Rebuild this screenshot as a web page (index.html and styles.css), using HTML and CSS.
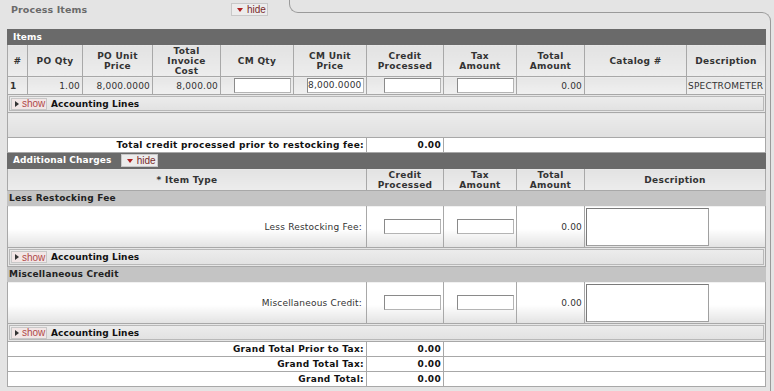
FILE: index.html
```html
<!DOCTYPE html>
<html>
<head>
<meta charset="utf-8">
<link rel="stylesheet" href="styles.css">
</head>
<body>
<div class="page">
  <div class="tabrow">
    <div class="tab">
      <span class="tab-title">Process Items</span>
      <span class="btn hide-btn"><span class="tri-down"></span>hide</span>
    </div>
    <div class="tab-curve"></div>
    <div class="tab-line"></div>
  </div>
  <div class="panel">
    <table class="grid">
      <colgroup>
        <col class="c1"><col class="c2"><col class="c3"><col class="c4"><col class="c5"><col class="c6">
        <col class="c7"><col class="c8"><col class="c9"><col class="c10"><col class="c11">
      </colgroup>
      <tr class="bar"><td colspan="11">Items</td></tr>
      <tr class="head">
        <th class="hl">#</th>
        <th>PO Qty</th>
        <th>PO Unit<br>Price</th>
        <th>Total<br>Invoice<br>Cost</th>
        <th>CM Qty</th>
        <th>CM Unit<br>Price</th>
        <th>Credit<br>Processed</th>
        <th>Tax<br>Amount</th>
        <th>Total<br>Amount</th>
        <th>Catalog #</th>
        <th class="hr">Description</th>
      </tr>
      <tr class="item">
        <td class="b">1</td>
        <td class="num">1.00</td>
        <td class="num">8,000.0000</td>
        <td class="num">8,000.00</td>
        <td class="inp"><span class="field"></span></td>
        <td class="inp"><span class="field">8,000.0000</span></td>
        <td class="inp"><span class="field"></span></td>
        <td class="inp"><span class="field"></span></td>
        <td class="num">0.00</td>
        <td></td>
        <td class="desc">SPECTROMETER</td>
      </tr>
      <tr class="acct acct-first"><td colspan="11"><div class="acct-box"><span class="btn show-btn"><span class="tri-right"></span>show</span><span class="acct-label">Accounting Lines</span></div></td></tr>
      <tr class="blank"><td colspan="11"></td></tr>
      <tr class="total"><td colspan="6" class="lbl">Total credit processed prior to restocking fee:</td><td class="val">0.00</td><td colspan="4"></td></tr>
      <tr class="bar bar2"><td colspan="11">Additional Charges <span class="btn hide-btn bar-btn"><span class="tri-down"></span>hide</span></td></tr>
      <tr class="head head2">
        <th colspan="6">* Item Type</th>
        <th>Credit<br>Processed</th>
        <th>Tax<br>Amount</th>
        <th>Total<br>Amount</th>
        <th colspan="2">Description</th>
      </tr>
      <tr class="sub"><td colspan="11">Less Restocking Fee</td></tr>
      <tr class="charge">
        <td colspan="6" class="clabel">Less Restocking Fee:</td>
        <td class="inp"><span class="field"></span></td>
        <td class="inp"><span class="field"></span></td>
        <td class="num">0.00</td>
        <td colspan="2" class="ta-cell"><span class="ta"></span></td>
      </tr>
      <tr class="acct acct-mid"><td colspan="11"><div class="acct-box"><span class="btn show-btn"><span class="tri-right"></span>show</span><span class="acct-label">Accounting Lines</span></div></td></tr>
      <tr class="sub"><td colspan="11">Miscellaneous Credit</td></tr>
      <tr class="charge">
        <td colspan="6" class="clabel">Miscellaneous Credit:</td>
        <td class="inp"><span class="field"></span></td>
        <td class="inp"><span class="field"></span></td>
        <td class="num">0.00</td>
        <td colspan="2" class="ta-cell"><span class="ta"></span></td>
      </tr>
      <tr class="acct acct-last"><td colspan="11"><div class="acct-box"><span class="btn show-btn"><span class="tri-right"></span>show</span><span class="acct-label">Accounting Lines</span></div></td></tr>
      <tr class="total"><td colspan="6" class="lbl">Grand Total Prior to Tax:</td><td class="val">0.00</td><td colspan="4"></td></tr>
      <tr class="total"><td colspan="6" class="lbl">Grand Total Tax:</td><td class="val">0.00</td><td colspan="4"></td></tr>
      <tr class="total"><td colspan="6" class="lbl">Grand Total:</td><td class="val">0.00</td><td colspan="4"></td></tr>
    </table>
  </div>
</div>
</body>
</html>
```
FILE: styles.css
```css
html, body {
  margin: 0;
  padding: 0;
  background: #e4e4e4;
}
.page {
  width: 774px;
  height: 391px;
  background: #e4e4e4;
  font-family: "DejaVu Sans", Verdana, sans-serif;
  font-size: 9px;
  color: #333;
  overflow: hidden;
}
.tabrow {
  display: flex;
  height: 29px;
  margin-right: 3px;
}
.tab {
  width: 289px;
  display: flex;
  align-items: flex-start;
}
.tab-title {
  margin: 4px 0 0 11px;
  font-weight: bold;
  font-size: 9.5px;
  color: #6a6a6a;
  letter-spacing: 0.1px;
  width: 220px;
}
.tab-curve {
  width: 8px;
  height: 12px;
  border-left: 1px solid #9a9a9a;
  border-bottom: 1px solid #9a9a9a;
  border-bottom-left-radius: 9px;
}
.tab-line {
  flex: 1;
  margin-top: 12px;
  border-top: 1px solid #9a9a9a;
  border-right: 1px solid #9a9a9a;
  border-top-right-radius: 9px;
}
.btn {
  display: inline-flex;
  align-items: center;
  font-family: "Liberation Sans", Arial, sans-serif;
  font-size: 10px;
  box-sizing: border-box;
}
.hide-btn {
  margin-top: 3px;
  height: 13px;
  width: 37px;
  padding-left: 5px;
  background: #ececec;
  border: 1px solid #c8c8c8;
  color: #7a2a2a;
}
.tri-down {
  width: 0;
  height: 0;
  border-left: 3px solid transparent;
  border-right: 3px solid transparent;
  border-top: 4px solid #b02020;
  margin-right: 4px;
}
.tri-right {
  width: 0;
  height: 0;
  border-top: 3px solid transparent;
  border-bottom: 3px solid transparent;
  border-left: 4px solid #333;
  margin-right: 3px;
}
.panel {
  margin-right: 3px;
  padding: 0 5px 4px 7px;
  border-right: 1px solid #9a9a9a;
  height: 362px;
}
.grid {
  width: 758px;
  border-collapse: collapse;
  table-layout: fixed;
}
.c1 { width: 20px; }
.c2 { width: 55px; }
.c3 { width: 70px; }
.c4 { width: 68px; }
.c5 { width: 73px; }
.c6 { width: 73px; }
.c7 { width: 77px; }
.c8 { width: 73px; }
.c9 { width: 68px; }
.c10 { width: 102px; }
.c11 { width: 79px; }
.grid td, .grid th {
  border: 1px solid #a8a8a8;
  padding: 0 2px;
  overflow: hidden;
  white-space: nowrap;
}
.bar td {
  background: #6a6a6a;
  border-color: #6a6a6a;
  color: #fff;
  font-weight: bold;
  font-size: 9px;
  height: 14px;
  padding: 0 0 0 5px;
  letter-spacing: 0.1px;
}
.bar2 td {
  height: 15px;
}
.bar-btn {
  margin: 0 0 0 6px;
  vertical-align: middle;
  letter-spacing: 0;
  font-weight: normal;
}
.head th {
  background: linear-gradient(#e2e2e2, #ededed);
  font-weight: bold;
  color: #333;
  height: 31px;
  line-height: 10px;
  text-align: center;
  letter-spacing: 0.3px;
}
.head2 th {
  height: 21px;
}
.item td {
  background: linear-gradient(#e6e6e6, #f0f0f0);
  height: 17px;
  letter-spacing: 0.2px;
}
.b { font-weight: bold; }
.num { text-align: right; }
.desc { padding-left: 1px !important; }
.inp { text-align: right; }
.field {
  display: inline-block;
  box-sizing: border-box;
  width: 57px;
  height: 15px;
  line-height: 13px;
  background: #fff;
  border: 1px solid #b4b4b4;
  border-top-color: #8a8a8a;
  border-left-color: #8a8a8a;
  vertical-align: middle;
  text-align: right;
  padding-right: 2px;
  font-size: 9px;
  color: #333;
}
.acct td {
  background: #e6e6e6;
  height: 17px;
  padding: 0 1px;
}
.acct-mid td {
  height: 18px;
}
.acct-box {
  display: flex;
  align-items: center;
  height: 15px;
  border: 1px solid #b8b8b8;
  background: linear-gradient(#ececec, #e2e2e2);
  box-sizing: border-box;
}
.acct-mid .acct-box {
  height: 16px;
}
.show-btn {
  height: 12px;
  width: 36px;
  padding-left: 3px;
  margin-left: 1px;
  background: #f2e6e6;
  border: 1px solid #c8c8c8;
  color: #b04848;
}
.acct-label {
  margin-left: 4px;
  font-weight: bold;
  color: #111;
  font-size: 9px;
  letter-spacing: 0.1px;
}
.blank td {
  height: 24px;
  background: linear-gradient(#ececec, #e0e0e0);
}
.total td {
  background: #fff;
  height: 14px;
  font-weight: bold;
  color: #111;
  letter-spacing: 0.3px;
}
.lbl, .val { text-align: right; }
.sub td {
  background: #c4c4c4;
  border-color: #c4c4c4;
  height: 14px;
  font-weight: bold;
  color: #222;
  padding-left: 1px;
  letter-spacing: 0.2px;
}
.charge td {
  height: 41px;
  background: linear-gradient(#fff 55%, #e2e2e2);
  letter-spacing: 0.2px;
}
.clabel {
  text-align: right;
  padding-right: 4px !important;
}
.ta-cell {
  padding: 0 1px !important;
}
.ta {
  display: block;
  width: 123px;
  height: 38px;
  box-sizing: border-box;
  background: #fff;
  border: 1px solid #a0a0a0;
  border-top-color: #7a7a7a;
  border-left-color: #7a7a7a;
}
```
